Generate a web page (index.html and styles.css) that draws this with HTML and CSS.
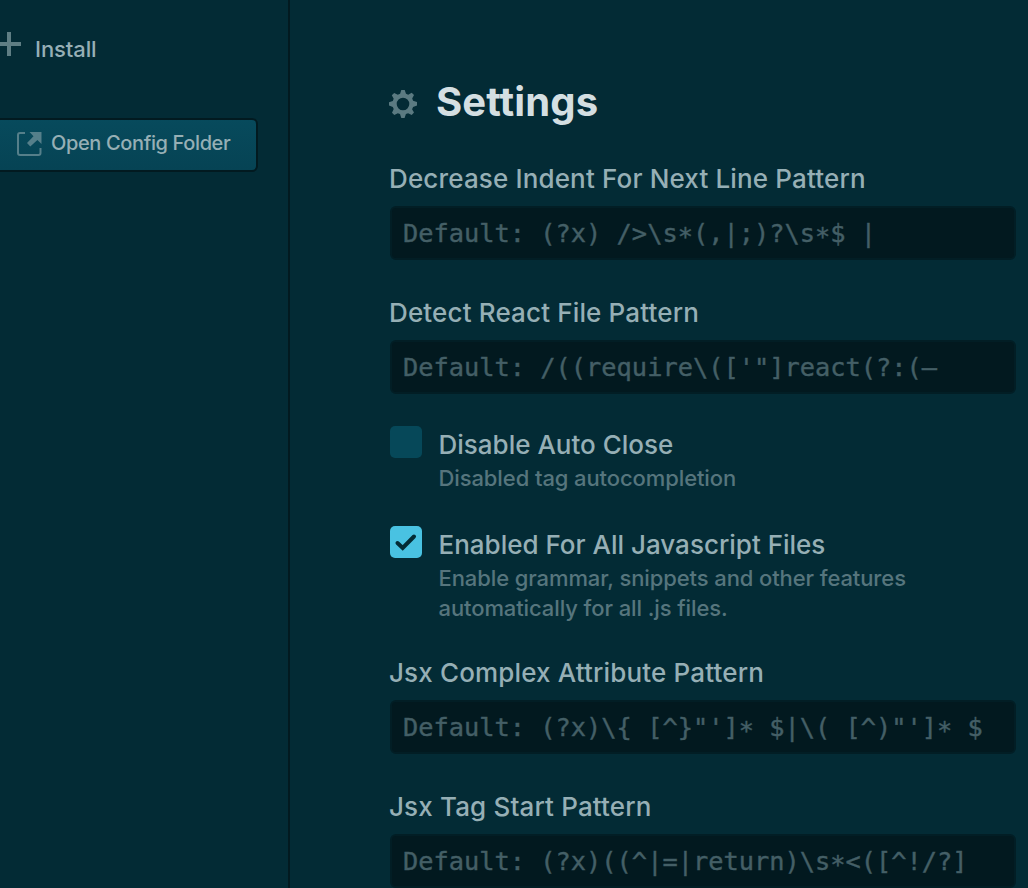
FILE: index.html
```html
<!DOCTYPE html>
<html lang="en">
<head>
<meta charset="utf-8">
<title>Settings</title>
<link rel="stylesheet" href="styles.css">
</head>
<body>
<div class="app">
  <aside class="sidebar">
    <div class="install">
      <svg class="plus-icon" viewBox="0 0 21 24" width="21" height="24"><path d="M7 0h4v10h10v4H11v10H7V14H0v-4h7z"/></svg>
      <span class="install-label">Install</span>
    </div>
    <button class="config-button" type="button">
      <svg class="link-icon" viewBox="0 0 26 26" width="26" height="26"><path class="link-frame" d="M9 2H4Q2 2 2 4V22Q2 24 4 24H22.5Q24.5 24 24.5 22V17"/><path class="link-arrow" d="M13.5 1H25.5V13L21.4 9.1L14.3 15.5L11 12L17.5 5.2z"/></svg>
      <span class="config-label">Open Config Folder</span>
    </button>
  </aside>
  <main class="panel">
    <h1 class="heading">
      <svg class="gear-icon" viewBox="0 0 28 28" width="28" height="28"><path fill-rule="evenodd" d="M28 15.5V12.1L24.1 10.8L23.2 8.6L25 5L22.7 2.8L19.2 4.7L17 3.8L15.7 0H12.3L11.1 3.8L8.8 4.7L5.2 3L2.8 5.3L4.7 8.8L3.8 11L0 12.3V15.6L3.8 16.9L4.7 19.1L3 22.7L5.3 25L8.8 23.2L11 24.1L12.3 28H15.6L16.9 24.1L19.1 23.2L22.7 25L25 22.6L23.1 19.2L24.1 17zM14 20.3A6.3 6.3 0 1 1 14 7.7A6.3 6.3 0 0 1 14 20.3z"/></svg>
      <span class="heading-text">Settings</span>
    </h1>
    <div class="field">
      <div class="label">Decrease Indent For Next Line Pattern</div>
      <div class="editor">Default: (?x) /&gt;\s<span class="star">*</span>(,|;)?\s<span class="star">*</span>$ |</div>
    </div>
    <div class="field">
      <div class="label">Detect React File Pattern</div>
      <div class="editor">Default: /((require\(['"]react(?:(–</div>
    </div>
    <div class="option">
      <span class="checkbox"></span>
      <div class="option-text">
        <div class="label">Disable Auto Close</div>
        <p class="description">Disabled tag autocompletion</p>
      </div>
    </div>
    <div class="option option-enabled">
      <span class="checkbox checked"><svg viewBox="0 0 32 32" width="32" height="32"><path d="M7.5 17L12.7 22L24 10.5"/></svg></span>
      <div class="option-text">
        <div class="label">Enabled For All Javascript Files</div>
        <p class="description">Enable grammar, snippets and other features<br>automatically for all .js files.</p>
      </div>
    </div>
    <div class="field">
      <div class="label">Jsx Complex Attribute Pattern</div>
      <div class="editor">Default: (?x)\{ [^}"']<span class="star">*</span> $|\( [^)"']<span class="star">*</span> $</div>
    </div>
    <div class="field">
      <div class="label">Jsx Tag Start Pattern</div>
      <div class="editor">Default: (?x)((^|=|return)\s<span class="star">*</span>&lt;([^!/?]</div>
    </div>
  </main>
</div>
</body>
</html>
```
FILE: styles.css
```css
* { box-sizing: border-box; }
body {
  margin: 0;
  height: 888px;
  overflow: hidden;
  background: #032b35;
  color: #96afb5;
  font-family: Inter, "Liberation Sans", sans-serif;
  font-weight: 500;
}
.app { display: flex; height: 888px; }
.sidebar {
  flex: none;
  width: 290px;
  border-right: 2px solid #021a20;
  padding-top: 32px;
}
.install { display: flex; gap: 14px; height: 34px; }
.plus-icon { fill: #5f7e84; }
.install-label { font-size: 22px; line-height: 34px; letter-spacing: -0.1px; }
.config-button {
  display: flex;
  width: 258px;
  height: 54px;
  margin: 52px 0 0;
  padding: 11px 0 0 16px;
  gap: 9px;
  border: 2px solid #021a20;
  border-left: 0;
  border-radius: 0 6px 6px 0;
  background: linear-gradient(#074a5c, #064354);
  color: #96afb5;
  font: 500 20px/24px Inter, "Liberation Sans", sans-serif;
  letter-spacing: -0.37px;
  white-space: nowrap;
}
.link-icon { flex: none; }
.link-frame { fill: none; stroke: #557f8a; stroke-width: 2; }
.link-arrow { fill: #557f8a; }
.panel { flex: 1; padding: 79px 12px 0 99px; }
.heading {
  display: flex;
  align-items: center;
  gap: 19px;
  height: 46px;
  margin: 0 0 33px;
  color: #d4dfe2;
  font-size: 40px;
  line-height: 46px;
  letter-spacing: 0.1px;
}
.gear-icon { fill: #5b7a81; margin-top: 3px; }
.field { height: 134px; }
.label {
  height: 42px;
  font-size: 26px;
  line-height: 42px;
  letter-spacing: 0.15px;
  white-space: nowrap;
}
.editor {
  height: 54px;
  margin: 6px 0 0 1px;
  padding: 0 11px;
  border: 2px solid #021e25;
  border-radius: 6px;
  background: #02191f;
  color: #445f66;
  font: 25.35px/50px "DejaVu Sans Mono", monospace;
  -webkit-text-stroke: 0.4px #445f66;
  white-space: pre;
}
.star { position: relative; top: 3px; }
.option { display: flex; gap: 16.5px; height: 100px; padding-left: 1px; }
.option-enabled { height: 126px; }
.checkbox {
  flex: none;
  width: 32px;
  height: 32px;
  border-radius: 5px;
  background: #064859;
}
.checked { background: #49c2e2; }
.checked svg {
  display: block;
  fill: none;
  stroke: #032b35;
  stroke-width: 4;
  stroke-linecap: round;
}
.option .label { height: 37px; line-height: 38px; letter-spacing: 0; }
.description {
  margin: 0;
  color: #56757d;
  font-size: 22px;
  line-height: 30px;
  letter-spacing: -0.1px;
  white-space: nowrap;
}
```
